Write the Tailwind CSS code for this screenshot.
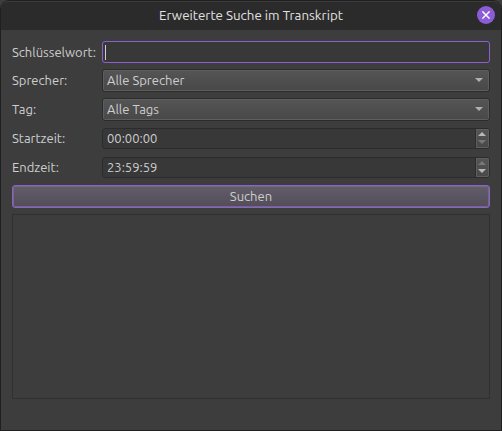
<!DOCTYPE html>
<html lang="de"><head><meta charset="utf-8"><title>Erweiterte Suche im Transkript</title>
<script src="https://cdn.jsdelivr.net/npm/@tailwindcss/browser@4"></script></head>
<body class="h-[431px] w-[502px] overflow-hidden bg-[#3d3d3d]">
<main class="flex h-[431px] w-[502px] flex-col overflow-hidden rounded-t-[9px] border border-[#202020] bg-[#3d3d3d] font-['Ubuntu','Noto_Sans',sans-serif] text-[13px] leading-[20px] text-[#cecece]">
<header class="grid h-[29px] shrink-0 grid-cols-[1fr_auto_1fr] items-center rounded-t-[8px] border-t border-[#3b3b3b] bg-[#2b2b2b] pr-[6px] pl-[6px] text-[#e2e2e2]">
<span></span><h1 class="text-[13.33px] whitespace-nowrap">Erweiterte Suche im Transkript</h1>
<button class="mb-[2px] flex size-[18px] items-center justify-center justify-self-end rounded-full bg-[#8c5cd6]" aria-label="Schließen"><svg class="size-[8px]" viewBox="0 0 8 8" fill="none" stroke="#fff" stroke-width="1.4"><path d="M.4.4 7.6 7.6M7.6.4.4 7.6"/></svg></button>
</header>
<section class="flex flex-col px-[11px] pt-[11px]">
<div class="mb-[6px] flex h-[22px] items-center"><label class="w-[90px] whitespace-nowrap">Schlüsselwort:</label><div class="flex h-[22px] w-[388px] items-center rounded-[3px] border border-[#8c5fd3] bg-[#383838] pl-[2px]"><span class="h-[15px] w-px bg-[#cecece]"></span></div></div>
<div class="mb-[6px] flex h-[23px] items-center"><label class="w-[90px] pb-px">Sprecher:</label><div class="flex h-[23px] w-[388px] items-center justify-between rounded-[3px] border border-[#2c2c2c] bg-linear-to-b from-[#555] to-[#484848] pr-[6px] pl-[4px] inset-ring inset-ring-[#5e5e5e]"><span class="pb-px">Alle Sprecher</span><svg class="mb-px h-[4px] w-[8px]" viewBox="0 0 8 4"><path d="M0 0h8L4 4z" fill="#b0b0b0"/></svg></div></div>
<div class="mb-[7px] flex h-[23px] items-center"><label class="w-[90px] pb-px">Tag:</label><div class="flex h-[23px] w-[388px] items-center justify-between rounded-[3px] border border-[#2c2c2c] bg-linear-to-b from-[#555] to-[#484848] pr-[6px] pl-[4px] inset-ring inset-ring-[#5e5e5e]"><span class="pb-px">Alle Tags</span><svg class="mb-px h-[4px] w-[8px]" viewBox="0 0 8 4"><path d="M0 0h8L4 4z" fill="#b0b0b0"/></svg></div></div>
<div class="mb-[8px] flex h-[21px] items-center"><label class="w-[90px] pb-px">Startzeit:</label><div class="flex h-[21px] w-[388px] justify-between rounded-[3px] border border-[#2c2c2c] bg-[#383838] pl-[4px]"><span class="leading-[18px]">00:00:00</span><span class="flex w-[14px] flex-col items-center justify-center gap-[4px] rounded-r-[2px] border-l border-[#2c2c2c] bg-linear-to-b from-[#555] to-[#484848] pr-px pb-px inset-ring inset-ring-[#5e5e5e]"><svg class="h-[4px] w-[8px]" viewBox="0 0 8 4"><path d="M0 4h8L4 0z" fill="#b8b8b8"/></svg><svg class="h-[4px] w-[8px]" viewBox="0 0 8 4"><path d="M0 0h8L4 4z" fill="#777"/></svg></span></div></div>
<div class="mb-[7px] flex h-[21px] items-center"><label class="w-[90px] pb-px">Endzeit:</label><div class="flex h-[21px] w-[388px] justify-between rounded-[3px] border border-[#2c2c2c] bg-[#383838] pl-[4px]"><span class="leading-[18px]">23:59:59</span><span class="flex w-[14px] flex-col items-center justify-center gap-[4px] rounded-r-[2px] border-l border-[#2c2c2c] bg-linear-to-b from-[#555] to-[#484848] pr-px pb-px inset-ring inset-ring-[#5e5e5e]"><svg class="h-[4px] w-[8px]" viewBox="0 0 8 4"><path d="M0 4h8L4 0z" fill="#777"/></svg><svg class="h-[4px] w-[8px]" viewBox="0 0 8 4"><path d="M0 0h8L4 4z" fill="#b8b8b8"/></svg></span></div></div>
<button class="mb-[6px] flex h-[23px] w-[478px] items-center justify-center rounded-[3px] border border-[#8c5fd3] bg-linear-to-b from-[#625d69] to-[#524d59] inset-ring inset-ring-[#706a79]"><span class="pb-px">Suchen</span></button>
<div class="h-[185px] w-[478px] border border-[#303030]"></div>
</section>
</main></body></html>
